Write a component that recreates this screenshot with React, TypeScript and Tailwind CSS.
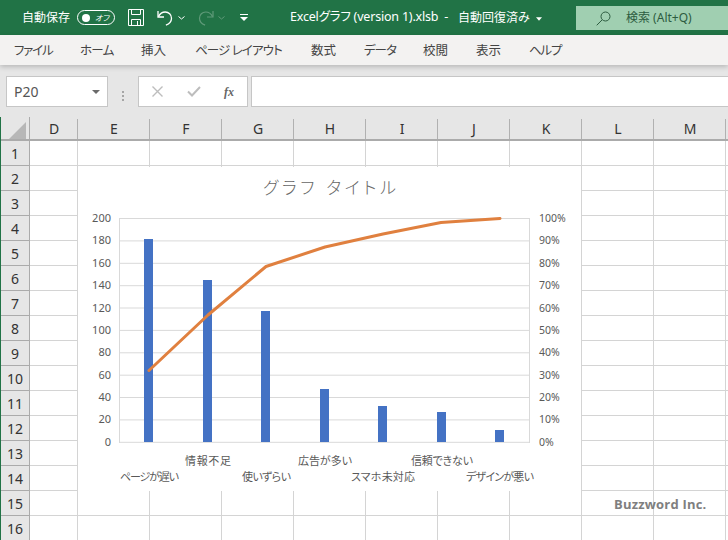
const columns = [
  { name: "D", width: "w-[48px]" },
  { name: "E", width: "w-[72px]" },
  { name: "F", width: "w-[72px]" },
  { name: "G", width: "w-[72px]" },
  { name: "H", width: "w-[72px]" },
  { name: "I", width: "w-[72px]" },
  { name: "J", width: "w-[72px]" },
  { name: "K", width: "w-[72px]" },
  { name: "L", width: "w-[72px]" },
  { name: "M", width: "w-[72px]" },
  { name: "", width: "w-[72px]" },
];
const rows = Array.from({ length: 16 }, (_, i) => i + 1);
const tabs = [
  { label: "ファイル", width: "w-[66px] tracking-[-1.2px]" },
  { label: "ホーム", width: "w-[61px] tracking-[-0.7px]" },
  { label: "挿入", width: "w-[54px]" },
  { label: "ページ レイアウト", width: "w-[116px] tracking-[-0.9px]" },
  { label: "数式", width: "w-[53px]" },
  { label: "データ", width: "w-[59px] tracking-[-1px]" },
  { label: "校閲", width: "w-[53px]" },
  { label: "表示", width: "w-[53px]" },
  { label: "ヘルプ", width: "w-[60px] tracking-[-1.2px]" },
];

const gridY = [218.5, 240.9, 263.3, 285.7, 308, 330.4, 352.8, 375.2, 397.5, 419.9, 442.3];
const bars = [
  { x: 144, top: 239 },
  { x: 203, top: 280 },
  { x: 261, top: 311 },
  { x: 320, top: 389 },
  { x: 378, top: 406 },
  { x: 437, top: 412 },
  { x: 495, top: 430 },
];
const linePoints = "149,370.5 208,315 266,266.5 325,247 383,234 441,222.5 500,218.5";
const categories = [
  { label: "ページが遅い", x: 120, y: 481, w: 59 },
  { label: "情報不足", x: 185, y: 465, w: 46 },
  { label: "使いずらい", x: 242, y: 481, w: 49 },
  { label: "広告が多い", x: 298, y: 465, w: 54 },
  { label: "スマホ未対応", x: 351, y: 481, w: 64 },
  { label: "信頼できない", x: 411, y: 465, w: 62 },
  { label: "デザインが悪い", x: 466, y: 481, w: 68 },
];

function TitleBar() {
  return (
    <div className="h-[35px] bg-[#217346] flex items-center text-white relative shrink-0">
      <span className="ml-[22px] text-[12px] leading-none">自動保存</span>
      <div className="ml-[7px] w-[38px] h-[15px] rounded-full border border-white flex items-center justify-between pl-[4px] pr-[5px]">
        <span className="w-[8px] h-[8px] rounded-full bg-white" />
        <span className="text-[8px] leading-none italic">オフ</span>
      </div>
      <svg className="ml-[13px]" width="16" height="17" viewBox="0 0 16 17" fill="none" stroke="#fff" strokeWidth="1">
        <path d="M.5.5h15v16H.5z" />
        <path d="M3.5.5v5h9v-5M3.5 16.5v-6h9v6M9.5 12v4" />
      </svg>
      <svg className="ml-[13px]" width="17" height="18" viewBox="0 0 17 18" fill="none" stroke="#fff" strokeWidth="1.3">
        <path d="M1 2v6h6" />
        <path d="M1.4 7.6C3 4.5 5.4 3 8.3 3c3.4 0 6.2 2.6 6.2 6.2 0 3.2-2.2 5.6-5.6 6.9" />
      </svg>
      <svg className="ml-[4px]" width="7" height="4" viewBox="0 0 7 4" fill="none" stroke="#fff" strokeWidth="1">
        <path d="M.5.5l3 2.5 3-2.5" />
      </svg>
      <svg className="ml-[12px]" width="17" height="18" viewBox="0 0 17 18" fill="none" stroke="#5f9a79" strokeWidth="1.2">
        <path d="M16 2v6h-6" />
        <path d="M15.6 7.6C14 4.5 11.6 3 8.7 3 5.3 3 2.5 5.6 2.5 9.2c0 3.2 2.2 5.6 5.6 6.9" />
      </svg>
      <svg className="ml-[4px]" width="7" height="4" viewBox="0 0 7 4" fill="none" stroke="#5f9a79" strokeWidth="1">
        <path d="M.5.5l3 2.5 3-2.5" />
      </svg>
      <svg className="ml-[15px]" width="8" height="7" viewBox="0 0 8 7" fill="#fff">
        <path d="M0 0h8v1H0zM0 3h8L4 7z" />
      </svg>
      <span className="ml-[42px] w-[168px] text-[12.500px] leading-none whitespace-pre tracking-[-0.2px]">Excelグラフ (version 1).xlsb  -</span>
      <span className="text-[12px] leading-none whitespace-pre w-[78px]">自動回復済み</span>
      <svg className="mt-[2px]" width="6" height="4" viewBox="0 0 7 4" fill="#fff">
        <path d="M0 0h7L3.500 4z" />
      </svg>
      <div className="absolute left-[576px] top-[6px] w-[152px] h-[24px] bg-[#a0cfb1] flex items-center text-[#2d5c40]">
        <svg className="ml-[20px]" width="15" height="15" viewBox="0 0 15 15" fill="none" stroke="#2d5c40" strokeWidth="1">
          <circle cx="9.500" cy="5.500" r="4.500" />
          <path d="M6.200 8.800L.7 14.300" />
        </svg>
        <span className="ml-[15px] text-[12px] leading-none">検索 (Alt+Q)</span>
      </div>
    </div>
  );
}

function RibbonTabs() {
  return (
    <div className="h-[30px] bg-[#f3f2f1] flex items-center pl-[14px] pt-[2px] text-[12.5px] text-[#444] relative z-10 shrink-0 shadow-[0_2px_5px_rgba(0,0,0,0.2)]">
      {tabs.map((tab) => (
        <span key={tab.label} className={`${tab.width} whitespace-pre leading-none`}>{tab.label}</span>
      ))}
    </div>
  );
}

function FormulaBar() {
  return (
    <div className="h-[52px] bg-[#e6e6e6] flex pt-[11px] pl-[6px] shrink-0">
      <div className="w-[102px] h-[31px] bg-white border border-[#c6c6c6] flex items-center justify-between pl-[7px] pr-[7px] text-[14px] text-[#555]">
        <span>P20</span>
        <svg width="8" height="4" viewBox="0 0 8 4" fill="#6a6a6a"><path d="M0 0h8L4 4z" /></svg>
      </div>
      <div className="w-[30px] flex flex-col items-center justify-center gap-[2px] -mt-[1px]">
        <span className="w-[2px] h-[2px] bg-[#a5a5a5]" />
        <span className="w-[2px] h-[2px] bg-[#a5a5a5]" />
        <span className="w-[2px] h-[2px] bg-[#a5a5a5]" />
      </div>
      <div className="w-[110px] h-[31px] bg-white border border-[#c6c6c6] flex items-center">
        <svg className="ml-[13px]" width="11" height="11" viewBox="0 0 11 11" stroke="#bdbdbd" strokeWidth="1.4" fill="none">
          <path d="M.5.500l10 10M10.500.500l-10 10" />
        </svg>
        <svg className="ml-[24px]" width="14" height="11" viewBox="0 0 14 11" stroke="#bdbdbd" strokeWidth="2" fill="none">
          <path d="M1 5.500l4 4 8-8.500" />
        </svg>
        <span className="ml-[23px] text-[12px] font-['Liberation_Serif',serif] italic font-bold text-[#666] leading-none">fx</span>
      </div>
      <div className="ml-[3px] flex-1 h-[31px] bg-white border-y border-l border-[#c6c6c6]" />
    </div>
  );
}

function ChartOverlay() {
  return (
    <div className="absolute left-[77px] top-[50px] w-[503px] h-[324px] bg-white">
      <svg className="block [font-feature-settings:'palt']" width="503" height="324" viewBox="78 167 503 324" fontFamily="'Noto Sans', 'Noto Sans CJK JP', sans-serif">
        <text x="263" y="194" textLength="133" fontSize="17" fontWeight="300" fill="#666">グラフ タイトル</text>
        {gridY.map((y) => (
          <line key={y} x1="119.500" x2="529.500" y1={y} y2={y} stroke="#d9d9d9" strokeWidth="1" />
        ))}
        <line x1="119.500" x2="119.500" y1="218" y2="443" stroke="#d9d9d9" />
        <line x1="529.500" x2="529.500" y1="218" y2="443" stroke="#d9d9d9" />
        {gridY.map((y, i) => (
          <text key={y} x="111" y={y + 3.500} textAnchor="end" fontSize="11" fill="#595959">{200 - i * 20}</text>
        ))}
        {gridY.map((y, i) => (
          <text key={y} x="539" y={y + 3.500} fontSize="10.500" fill="#595959">{100 - i * 10}%</text>
        ))}
        {bars.map((bar) => (
          <rect key={bar.x} x={bar.x} y={bar.top} width="9" height={442 - bar.top} fill="#4472c4" />
        ))}
        <polyline points={linePoints} fill="none" stroke="#e0803f" strokeWidth="3" strokeLinecap="round" strokeLinejoin="round" />
        {categories.map((cat) => (
          <text key={cat.label} x={cat.x} y={cat.y} textLength={cat.w} fontSize="11" fill="#595959">{cat.label}</text>
        ))}
      </svg>
    </div>
  );
}

function Sheet() {
  return (
    <div className="relative flex-1 overflow-hidden">
      <div className="flex h-[24px] bg-[#e6e6e6] border-b-2 border-[#ababab]">
        <div className="w-[29px] shrink-0 border-r border-[#ababab] relative">
          <svg className="absolute left-[8px] top-[5px]" width="17" height="17" viewBox="0 0 17 17" fill="#b7b7b7">
            <path d="M17 0v17H0z" />
          </svg>
        </div>
        {columns.map((col, i) => (
          <div key={i} className={`${col.width} shrink-0 flex items-center justify-center relative text-[14px] text-[#333]`}>
            {col.name}
            <span className="absolute right-0 bottom-0 w-px h-[20px] bg-[#b1b1b1]" />
          </div>
        ))}
      </div>
      {rows.map((row) => (
        <div key={row} className="flex h-[25px]">
          <div className="w-[29px] shrink-0 bg-[#e6e6e6] border-r border-b border-[#ababab] flex items-center justify-center text-[14px] text-[#333]">
            {row}
          </div>
          {columns.map((col, i) => (
            <div key={i} className={`${col.width} shrink-0 border-r border-b border-[#d4d4d4] bg-white`} />
          ))}
        </div>
      ))}
      <ChartOverlay />
      <span className="absolute left-[613px] top-[377px] text-[13px] leading-[20px] font-bold text-[#7f7f7f] font-['Open_Sans',sans-serif] tracking-[0.2px]">
        Buzzword Inc.
      </span>
    </div>
  );
}

export default function App() {
  return (
    <div className="w-[728px] h-[540px] overflow-hidden flex flex-col bg-white [font-feature-settings:'palt'] font-['Noto_Sans','Noto_Sans_CJK_JP',sans-serif]">
      <TitleBar />
      <RibbonTabs />
      <FormulaBar />
      <div className="flex-1 flex min-h-0">
        <div className="w-px bg-[#217346] shrink-0" />
        <Sheet />
      </div>
    </div>
  );
}
